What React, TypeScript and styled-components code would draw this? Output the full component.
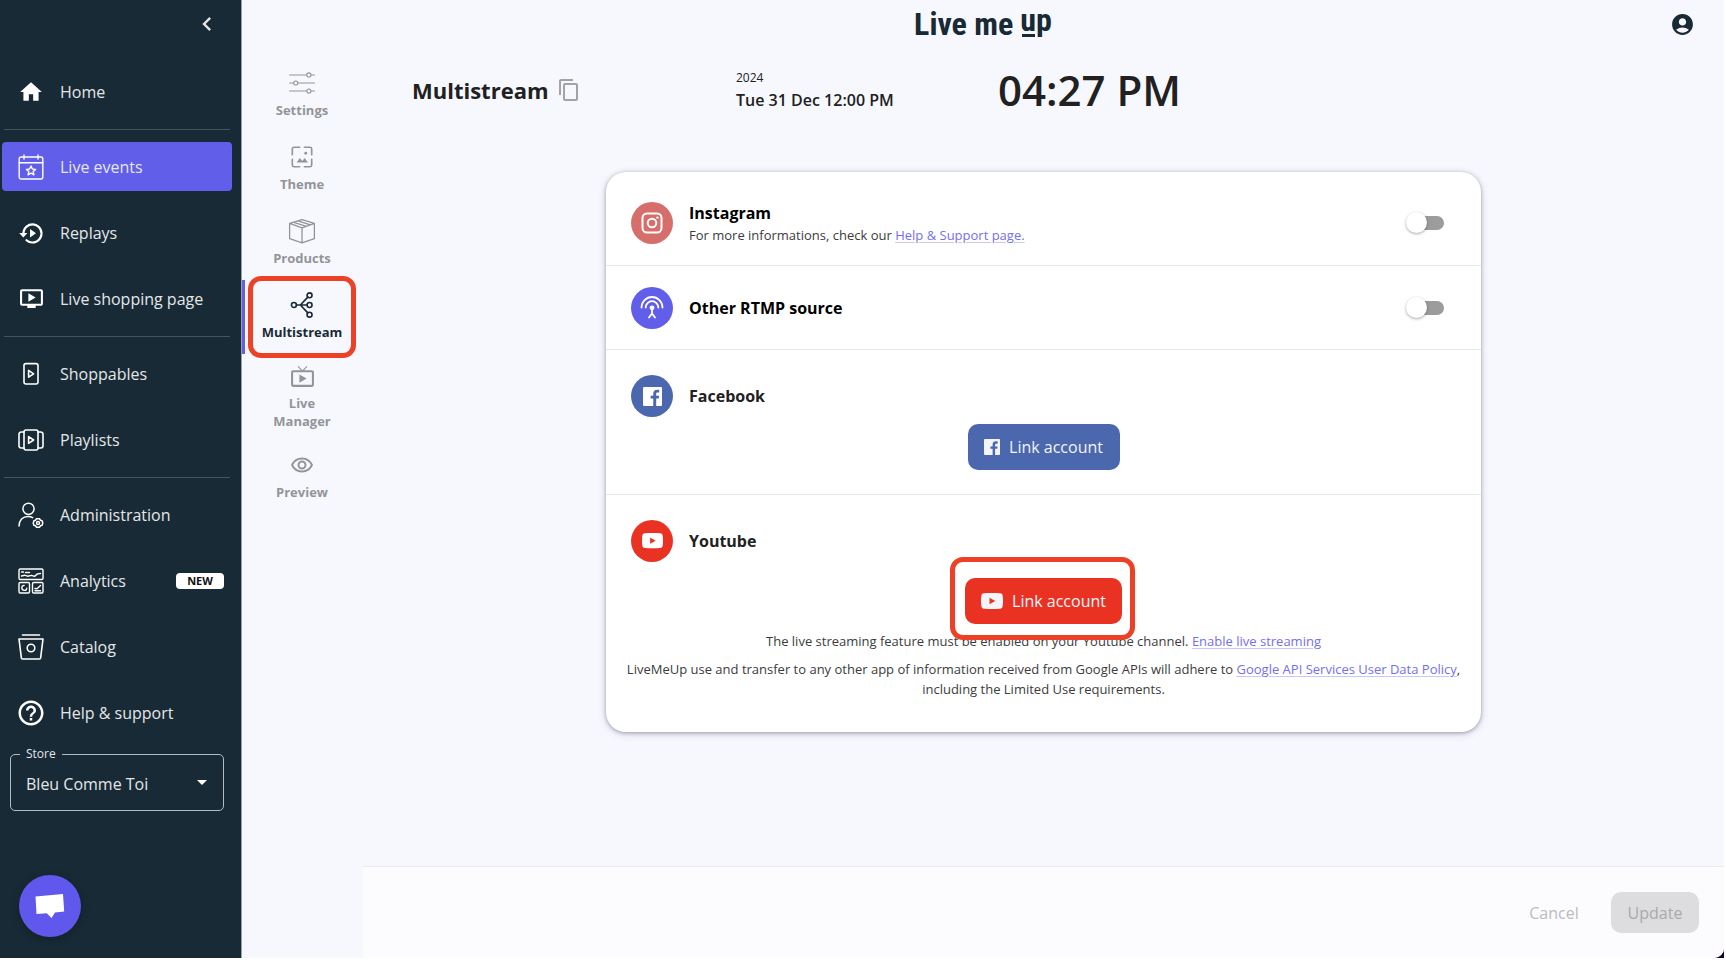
import React from 'react';
import styled, { createGlobalStyle, css } from 'styled-components';
import {
  MdAccountCircle,
  MdChevronLeft,
  MdContentCopy,
  MdHelpOutline,
  MdHome,
  MdLiveTv,
  MdOndemandVideo,
  MdOutlineRemoveRedEye,
} from 'react-icons/md';

const color = {
  navy: '#182a35',
  violet: '#615eea',
  page: '#f7f8fe',
  grey: '#949498',
  ink: '#212121',
  facebook: '#4b67ad',
  youtube: '#ea3223',
  callout: '#ec4127',
};

const GlobalStyle = createGlobalStyle`
  *, *::before, *::after { box-sizing: border-box; }
  body {
    margin: 0;
    background: #ffffff;
    color: ${color.ink};
    font-family: 'Open Sans', 'Noto Sans', sans-serif;
    font-size: 16px;
  }
  button, select, input { font: inherit; }
  h1, p { margin: 0; }
`;

const Shell = styled.div`
  display: flex;
  min-height: calc(100vh - 6px);
  margin: 0 2px 6px 0;
  background: #150033;
`;

const Sidebar = styled.aside`
  flex: 0 0 242px;
  display: flex;
  flex-direction: column;
  background: ${color.navy};
  color: #e4e7e9;
  border-right: 1px solid #9a9fa8;
`;

const SidebarTop = styled.div`
  display: flex;
  justify-content: flex-end;
  align-items: center;
  height: 48px;
  padding-right: 20px;
`;

const IconButton = styled.button`
  display: flex;
  padding: 0;
  border: 0;
  background: none;
  color: inherit;
  cursor: pointer;
`;

const NavList = styled.ul`
  display: flex;
  flex-direction: column;
  gap: 17px;
  margin: 0;
  padding: 12px 9px 13px 2px;
  list-style: none;

  &:first-child {
    padding-top: 19px;
  }

  &:last-child {
    padding-bottom: 10px;
  }
`;

const NavRule = styled.hr`
  height: 1px;
  margin: 0 11px 0 4px;
  border: 0;
  background: #46545d;
`;

const NavLink = styled.a<{ $active?: boolean }>`
  display: flex;
  align-items: center;
  gap: 16px;
  height: 49px;
  padding: 0 8px 0 16px;
  border-radius: 4px;
  color: inherit;
  text-decoration: none;
  background: ${(p) => (p.$active ? color.violet : 'transparent')};
`;

const NavIcon = styled.span`
  flex: none;
  display: flex;
  justify-content: center;
  width: 26px;
  color: #ffffff;

  svg {
    flex: none;
  }
`;

const NewBadge = styled.span`
  margin-left: auto;
  width: 48px;
  border-radius: 4px;
  background: #ffffff;
  color: #111111;
  font-size: 11px;
  font-weight: 700;
  line-height: 16px;
  text-align: center;
`;

const StoreField = styled.fieldset`
  position: relative;
  height: 64px;
  margin: 0 17px 0 10px;
  padding: 0;
  border: 1px solid #b5bcc0;
  border-radius: 5px;

  legend {
    margin-left: 9px;
    padding: 0 6px;
    font-size: 12px;
    line-height: 14px;
  }

  svg {
    position: absolute;
    right: 16px;
    top: 19px;
    pointer-events: none;
  }
`;

const StoreSelect = styled.select`
  appearance: none;
  width: 100%;
  height: 46px;
  padding: 0 40px 0 15px;
  border: 0;
  background: transparent;
  color: inherit;
`;

const ChatButton = styled.button`
  display: flex;
  align-items: center;
  justify-content: center;
  width: 62px;
  height: 62px;
  margin: auto 0 21px 19px;
  padding: 0;
  border: 0;
  border-radius: 50%;
  background: #6057ec;
  box-shadow: 0 2px 8px rgba(0, 0, 0, 0.25);
  cursor: pointer;
`;

const Workspace = styled.div`
  flex: 1;
  min-width: 0;
  display: flex;
  flex-direction: column;
  background: ${color.page};
  border-bottom-right-radius: 10px;
  overflow: hidden;
`;

const TopBar = styled.header`
  display: grid;
  grid-template-columns: 1fr auto 1fr;
  align-items: center;
  height: 48px;
  padding: 0 29px;
  color: ${color.navy};

  > button {
    grid-column: 3;
    justify-self: end;
  }
`;

const Logo = styled.a`
  grid-column: 2;
  display: flex;
  gap: 7px;
  color: ${color.navy};
  font-family: 'Liberation Sans Narrow', 'Roboto Condensed', sans-serif;
  font-size: 32px;
  font-weight: 700;
  line-height: 48px;
  text-decoration: none;
`;

const LogoUp = styled.span`
  position: relative;
  padding-bottom: 8px;
  line-height: 40px;

  &::after {
    content: '';
    position: absolute;
    left: 2px;
    top: 34px;
    width: 13px;
    height: 3px;
    background: currentColor;
  }
`;

const Columns = styled.div`
  flex: 1;
  display: flex;
`;

const StepNav = styled.nav`
  flex: 0 0 121px;
  display: flex;
  flex-direction: column;
  padding-top: 10px;
`;

const StepLink = styled.a<{ $active?: boolean; $tall?: boolean }>`
  position: relative;
  display: flex;
  flex-direction: column;
  align-items: center;
  justify-content: center;
  gap: 4px;
  height: ${(p) => (p.$tall ? 86 : 74)}px;
  padding: 0 20px 2px 16px;
  border-left: 3px solid ${(p) => (p.$active ? color.violet : 'transparent')};
  color: ${(p) => (p.$active ? color.navy : color.grey)};
  font-size: 13px;
  font-weight: 700;
  line-height: 18px;
  text-align: center;
  text-decoration: none;
`;

const StepIcon = styled.span`
  display: flex;
  align-items: center;
  justify-content: center;
  height: 28px;
`;

const Callout = styled.span<{ $inset: string }>`
  position: absolute;
  inset: ${(p) => p.$inset};
  border: 5px solid ${color.callout};
  border-radius: 13px;
  pointer-events: none;
`;

const Main = styled.main`
  flex: 1;
  min-width: 0;
  display: flex;
  flex-direction: column;
`;

const EventHeader = styled.div`
  display: grid;
  grid-template-columns: 324px 262px 1fr;
  align-items: center;
  height: 84px;
  padding-left: 49px;
`;

const Title = styled.div`
  display: flex;
  align-items: center;
  gap: 8px;
  color: #a3a3a6;

  h1 {
    color: ${color.ink};
    font-size: 22px;
    font-weight: 700;
    line-height: 32px;
  }
`;

const Schedule = styled.div`
  display: flex;
  flex-direction: column;
  font-weight: 600;
  line-height: 24px;

  small {
    font-size: 12px;
    font-weight: 400;
    line-height: 20px;
  }
`;

const Clock = styled.time`
  font-size: 42px;
  font-weight: 600;
  line-height: 56px;
`;

const Card = styled.section`
  width: 875px;
  max-width: 100%;
  margin: 40px auto auto;
  border-radius: 20px;
  background: #ffffff;
  box-shadow: 0 1px 4px rgba(40, 40, 60, 0.4), 0 2px 10px rgba(40, 40, 90, 0.12);
`;

const Channel = styled.div<{ $pad: string }>`
  display: flex;
  flex-direction: column;
  padding: ${(p) => p.$pad};
  border-bottom: 1px solid #e7e7e9;

  &:last-child {
    border-bottom: 0;
  }
`;

const ChannelHead = styled.div`
  display: flex;
  align-items: center;
  gap: 16px;
  min-height: 42px;
`;

const Disc = styled.span<{ $bg: string }>`
  flex: none;
  display: flex;
  align-items: center;
  justify-content: center;
  width: 42px;
  height: 42px;
  border-radius: 50%;
  background: ${(p) => p.$bg};
  color: #ffffff;
`;

const ChannelText = styled.div`
  flex: 1;
  display: flex;
  flex-direction: column;
`;

const ChannelName = styled.label<{ $black?: boolean }>`
  color: ${(p) => (p.$black ? '#000000' : color.ink)};
  font-weight: 700;
  line-height: 24px;
`;

const Note = styled.p<{ $center?: boolean }>`
  color: #3c3c3c;
  font-size: 13px;
  line-height: 20px;
  ${(p) =>
    p.$center &&
    css`
      text-align: center;
    `}
`;

const Notes = styled.div`
  display: flex;
  flex-direction: column;
  gap: 8px;
  margin: 7px -12px 0;
`;

const TextLink = styled.a`
  color: #746ff0;
  text-decoration: underline;
  text-decoration-color: #c9c8f8;
  text-underline-offset: 2px;
`;

const Switch = styled.input`
  appearance: none;
  position: relative;
  width: 38px;
  height: 22px;
  margin: 0 12px 0 0;
  cursor: pointer;

  &::before {
    content: '';
    position: absolute;
    inset: 4px 0 4px 2px;
    border-radius: 8px;
    background: #9c9c9c;
  }

  &::after {
    content: '';
    position: absolute;
    left: 0;
    top: 0;
    width: 21px;
    height: 21px;
    border-radius: 50%;
    background: #ffffff;
    box-shadow: 0 1px 3px rgba(0, 0, 0, 0.35);
  }

  &:checked::after {
    left: 17px;
  }
`;

const LinkRow = styled.div<{ $gap: number }>`
  position: relative;
  z-index: 1;
  align-self: center;
  display: flex;
  margin-top: ${(p) => p.$gap}px;
`;

const LinkButton = styled.button<{ $bg: string; $width: number }>`
  display: flex;
  align-items: center;
  justify-content: center;
  gap: 9px;
  width: ${(p) => p.$width}px;
  height: 46px;
  padding: 0;
  border: 0;
  border-radius: 10px;
  background: ${(p) => p.$bg};
  color: #f4f5fb;
  cursor: pointer;
`;

const Footer = styled.footer`
  display: flex;
  align-items: center;
  justify-content: flex-end;
  gap: 13px;
  height: 92px;
  padding-right: 25px;
  border-top: 1px solid #ebebf1;
  background: #fcfcfe;
`;

const FooterButton = styled.button<{ $filled?: boolean }>`
  width: 88px;
  height: 41px;
  padding: 0;
  border: 0;
  border-radius: 10px;
  background: ${(p) => (p.$filled ? '#dddddf' : 'transparent')};
  color: ${(p) => (p.$filled ? '#a9a9ab' : '#bbbbbd')};
`;

type IconProps = { size: number; stroke?: number; children: React.ReactNode };

const LineIcon = ({ size, stroke = 1.5, children }: IconProps) => (
  <svg
    width={size}
    height={size}
    viewBox="0 0 26 26"
    fill="none"
    stroke="currentColor"
    strokeWidth={stroke}
    strokeLinecap="round"
    strokeLinejoin="round"
    aria-hidden="true"
  >
    {children}
  </svg>
);

const CalendarStarIcon = () => (
  <LineIcon size={26} stroke={1.4}>
    <rect x="1.2" y="3" width="23.6" height="22" rx="2" />
    <path d="M1.2 8.8h23.6M6 1v4M20 1v4" />
    <path d="M13 12l1.4 3 3.2.4-2.4 2.2.7 3.2-2.9-1.6-2.9 1.6.7-3.2-2.4-2.2 3.2-.4z" />
  </LineIcon>
);

const ReplayIcon = () => (
  <LineIcon size={26} stroke={2.2}>
    <path d="M5.5 14A9 9 0 1 1 8.5 20.2" />
    <path d="M1.2 13h8.2l-4.1 4.6z" fill="currentColor" stroke="none" />
    <path d="M12 9l6 4.2-6 4.2z" fill="currentColor" stroke="none" />
  </LineIcon>
);

const PhonePlayIcon = () => (
  <LineIcon size={26} stroke={1.6}>
    <rect x="6" y="2.6" width="14" height="20.4" rx="2" />
    <path d="M10.6 9.4v6.8l5-3.4z" />
  </LineIcon>
);

const PlaylistIcon = () => (
  <LineIcon size={26} stroke={1.6}>
    <rect x="6" y="3" width="14" height="20" rx="2" />
    <path d="M10.6 9.6v6.8l5-3.4zM6 5H3.2A2.2 2.2 0 0 0 1 7.2v11.6A2.2 2.2 0 0 0 3.2 21H6M20 5h2.8A2.2 2.2 0 0 1 25 7.2v11.6A2.2 2.2 0 0 1 22.8 21H20" />
  </LineIcon>
);

const AdminIcon = () => (
  <LineIcon size={26} stroke={1.5}>
    <circle cx="10.5" cy="6.8" r="5.6" />
    <path d="M1 24c0-6 3.8-9.6 9-9.6 2 0 3.4.4 4.6 1.2" />
    <circle cx="20" cy="21" r="1.5" />
    <path d="M18.4 16.8h3.2l.8 1.4 1.7.6.7 2.2-.7 2.2-1.7.6-.8 1.4h-3.2l-.8-1.4-1.7-.6-.7-2.2.7-2.2 1.7-.6z" />
  </LineIcon>
);

const AnalyticsIcon = () => (
  <LineIcon size={26} stroke={1.4}>
    <rect x="1" y="1" width="24" height="10.5" rx="1.2" />
    <rect x="1" y="14.5" width="10.5" height="10.5" rx="1.2" />
    <rect x="14.5" y="14.5" width="10.5" height="10.5" rx="1.2" />
    <path d="M3.5 4h2M7.5 4.5h4M3.5 8l3-.8 3 1 4-.8 3 1 3-2.5 3-.4" />
    <path d="M6.2 17.4a2.5 2.5 0 1 0 2.6 2.9M17 20.5l2 .3 3.5-3.3M17 22.8h5.500" />
  </LineIcon>
);

const CatalogIcon = () => (
  <LineIcon size={26} stroke={1.6}>
    <path d="M4.500 1h17M1 5h24l-2.400 19.200a1 1 0 0 1-1 .8H4.400a1 1 0 0 1-1-.8z" />
    <circle cx="13" cy="14" r="3.8" />
  </LineIcon>
);

const SlidersIcon = () => (
  <LineIcon size={28} stroke={1}>
    <path d="M1.500 5.500h15.800M21.600 5.500h3M1.500 13h3.500M9.300 13h15.300M1.500 20.500h15.800M21.600 20.500h3" />
    <circle cx="19.4" cy="5.5" r="1.9" />
    <circle cx="7.2" cy="13" r="1.9" />
    <circle cx="19.4" cy="20.5" r="1.9" />
  </LineIcon>
);

const FrameImageIcon = () => (
  <LineIcon size={28} stroke={1.5}>
    <path d="M10.800 4H5.500A1.500 1.500 0 0 0 4 5.500v5.300M15.200 4h5.300A1.500 1.500 0 0 1 22 5.500v5.300M4 15.200v5.300A1.500 1.500 0 0 0 5.500 22h5.300M22 15.200v5.300a1.500 1.500 0 0 1-1.500 1.500h-5.300" />
    <path d="M8 18l3-4 2.200 2.600L15.500 14l3 4z" fill="currentColor" stroke="none" />
    <circle cx="16.5" cy="9.5" r="1.3" fill="currentColor" stroke="none" />
  </LineIcon>
);

const BoxIcon = () => (
  <LineIcon size={28} stroke={1.2}>
    <path d="M13 2.500l11.500 3.500v14L13 24 1.500 20V6zM1.500 6L13 10l11.500-4M13 10v14M9.200 3.700l11.500 3.600M5.400 4.900L17 8.600" />
  </LineIcon>
);

const SplitIcon = () => (
  <LineIcon size={28} stroke={1.5}>
    <circle cx="5.5" cy="13" r="2.3" />
    <circle cx="20" cy="4" r="2.3" />
    <circle cx="20" cy="13" r="2.3" />
    <circle cx="20" cy="22" r="2.3" />
    <path d="M7.800 13h9.900M11.500 13L18.400 5.700M11.500 13l6.900 7.300" />
  </LineIcon>
);

const InstagramIcon = () => (
  <LineIcon size={26} stroke={2}>
    <rect x="3.5" y="3.5" width="19" height="19" rx="4.5" />
    <circle cx="13" cy="13" r="4.3" />
    <circle cx="18.4" cy="7.6" r="1.2" fill="currentColor" stroke="none" />
  </LineIcon>
);

const AntennaIcon = () => (
  <LineIcon size={26} stroke={1.8}>
    <path d="M2.500 12.500a10.500 10.500 0 0 1 21 0M6.700 12.500a6.300 6.300 0 0 1 12.600 0" />
    <circle cx="13" cy="12.8" r="2.4" fill="currentColor" stroke="none" />
    <path d="M13 13v5.500l-3 4M13 18.500l3 4" />
  </LineIcon>
);

const FacebookIcon = ({ size }: { size: number }) => (
  <svg width={size} height={size} viewBox="0 0 18 18" aria-hidden="true">
    <path
      fill="currentColor"
      d="M1 0h16a1 1 0 0 1 1 1v16a1 1 0 0 1-1 1h-4.500v-7h2.400l.4-2.700h-2.800V6.600c0-.8.4-1.300 1.400-1.300h1.500V2.800c-.4-.1-1.200-.2-2-.2-2.300 0-3.700 1.300-3.700 3.600v2.100H7.200V11h2.500v7H1a1 1 0 0 1-1-1V1a1 1 0 0 1 1-1z"
    />
  </svg>
);

const YoutubeIcon = ({ width }: { width: number }) => (
  <svg width={width} height={(width * 16) / 22} viewBox="0 0 22 16" aria-hidden="true">
    <path
      fill="currentColor"
      fillRule="evenodd"
      d="M3 .3C8 -.1 14 -.1 19 .3c1.700.2 2.500 1 2.700 2.700.4 3.300.4 6.700 0 10-.2 1.700-1 2.500-2.700 2.700-5 .4-11 .4-16 0C1.300 15.500.5 14.700.3 13c-.4-3.300-.4-6.700 0-10C.5 1.300 1.300.5 3 .3zM8.500 4.800v6.400L14.300 8z"
    />
  </svg>
);

const ChatIcon = () => (
  <svg width="30" height="26" viewBox="0 0 30 26" fill="#ffffff" aria-hidden="true">
    <path d="M.5 3.500L28 1l1.200 17.500-9.200.9L16.500 25l-4.800-4.800L1.500 21z" />
  </svg>
);

type NavItemProps = {
  href: string;
  icon: React.ReactNode;
  active?: boolean;
  isNew?: boolean;
  children: React.ReactNode;
};

const NavItem = ({ href, icon, active, isNew, children }: NavItemProps) => (
  <li>
    <NavLink href={href} $active={active} aria-current={active ? 'page' : undefined}>
      <NavIcon>{icon}</NavIcon>
      {children}
      {isNew && <NewBadge>NEW</NewBadge>}
    </NavLink>
  </li>
);

export default function App() {
  return (
    <>
      <GlobalStyle />
      <Shell>
        <Sidebar>
          <SidebarTop>
            <IconButton aria-label="Collapse menu">
              <MdChevronLeft size={28} />
            </IconButton>
          </SidebarTop>
          <nav aria-label="Main">
            <NavList>
              <NavItem href="#home" icon={<MdHome size={26} />}>Home</NavItem>
            </NavList>
            <NavRule />
            <NavList>
              <NavItem href="#live-events" icon={<CalendarStarIcon />} active>Live events</NavItem>
              <NavItem href="#replays" icon={<ReplayIcon />}>Replays</NavItem>
              <NavItem href="#live-shopping" icon={<MdOndemandVideo size={25} />}>Live shopping page</NavItem>
            </NavList>
            <NavRule />
            <NavList>
              <NavItem href="#shoppables" icon={<PhonePlayIcon />}>Shoppables</NavItem>
              <NavItem href="#playlists" icon={<PlaylistIcon />}>Playlists</NavItem>
            </NavList>
            <NavRule />
            <NavList>
              <NavItem href="#administration" icon={<AdminIcon />}>Administration</NavItem>
              <NavItem href="#analytics" icon={<AnalyticsIcon />} isNew>Analytics</NavItem>
              <NavItem href="#catalog" icon={<CatalogIcon />}>Catalog</NavItem>
              <NavItem href="#help" icon={<MdHelpOutline size={30} />}>Help &amp; support</NavItem>
            </NavList>
          </nav>
          <StoreField>
            <legend><label htmlFor="store">Store</label></legend>
            <StoreSelect id="store" defaultValue="Bleu Comme Toi">
              <option>Bleu Comme Toi</option>
            </StoreSelect>
            <svg width="10" height="5" viewBox="0 0 10 5" fill="#ffffff" aria-hidden="true">
              <path d="M0 0h10L5 5z" />
            </svg>
          </StoreField>
          <ChatButton aria-label="Open chat"><ChatIcon /></ChatButton>
        </Sidebar>

        <Workspace>
          <TopBar>
            <Logo href="#top">
              <span>Live me</span>
              <LogoUp>up</LogoUp>
            </Logo>
            <IconButton aria-label="Account"><MdAccountCircle size={25} /></IconButton>
          </TopBar>
          <Columns>
            <StepNav aria-label="Event steps">
              <StepLink href="#settings"><StepIcon><SlidersIcon /></StepIcon>Settings</StepLink>
              <StepLink href="#theme"><StepIcon><FrameImageIcon /></StepIcon>Theme</StepLink>
              <StepLink href="#products"><StepIcon><BoxIcon /></StepIcon>Products</StepLink>
              <StepLink href="#multistream" $active aria-current="step">
                <StepIcon><SplitIcon /></StepIcon>Multistream
                <Callout $inset="-4px 7px -4px 3px" />
              </StepLink>
              <StepLink href="#live-manager" $tall><StepIcon><MdLiveTv size={25} /></StepIcon>Live Manager</StepLink>
              <StepLink href="#preview"><StepIcon><MdOutlineRemoveRedEye size={24} /></StepIcon>Preview</StepLink>
            </StepNav>
            <Main>
              <EventHeader>
                <Title>
                  <h1>Multistream</h1>
                  <IconButton aria-label="Copy link"><MdContentCopy size={24} /></IconButton>
                </Title>
                <Schedule>
                  <small>2024</small>
                  <span>Tue 31 Dec 12:00 PM</span>
                </Schedule>
                <Clock dateTime="16:27">04:27 PM</Clock>
              </EventHeader>

              <Card>
                <Channel $pad="29px 25px 20px">
                  <ChannelHead>
                    <Disc $bg="#d66f6b"><InstagramIcon /></Disc>
                    <ChannelText>
                      <ChannelName htmlFor="instagram" $black>Instagram</ChannelName>
                      <Note>
                        For more informations, check our <TextLink href="#support">Help &amp; Support page.</TextLink>
                      </Note>
                    </ChannelText>
                    <Switch id="instagram" type="checkbox" />
                  </ChannelHead>
                </Channel>
                <Channel $pad="21px 25px 20px">
                  <ChannelHead>
                    <Disc $bg={color.violet}><AntennaIcon /></Disc>
                    <ChannelText>
                      <ChannelName htmlFor="rtmp" $black>Other RTMP source</ChannelName>
                    </ChannelText>
                    <Switch id="rtmp" type="checkbox" />
                  </ChannelHead>
                </Channel>
                <Channel $pad="25px 25px 24px">
                  <ChannelHead>
                    <Disc $bg={color.facebook}><FacebookIcon size={19} /></Disc>
                    <ChannelName as="span">Facebook</ChannelName>
                  </ChannelHead>
                  <LinkRow $gap={7}>
                    <LinkButton $bg={color.facebook} $width={152}><FacebookIcon size={16} />Link account</LinkButton>
                  </LinkRow>
                </Channel>
                <Channel $pad="25px 25px 33px">
                  <ChannelHead>
                    <Disc $bg={color.youtube}><YoutubeIcon width={21} /></Disc>
                    <ChannelName as="span">Youtube</ChannelName>
                  </ChannelHead>
                  <LinkRow $gap={16}>
                    <LinkButton $bg={color.youtube} $width={157}><YoutubeIcon width={22} />Link account</LinkButton>
                    <Callout $inset="-21px -13px -16px -15px" />
                  </LinkRow>
                  <Notes>
                    <Note $center>
                      The live streaming feature must be enabled on your Youtube channel.{' '}
                      <TextLink href="#enable">Enable live streaming</TextLink>
                    </Note>
                    <Note $center>
                      LiveMeUp use and transfer to any other app of information received from Google APIs will adhere to{' '}
                      <TextLink href="#policy">Google API Services User Data Policy</TextLink>,
                      <br />
                      including the Limited Use requirements.
                    </Note>
                  </Notes>
                </Channel>
              </Card>

              <Footer>
                <FooterButton disabled>Cancel</FooterButton>
                <FooterButton disabled $filled>Update</FooterButton>
              </Footer>
            </Main>
          </Columns>
        </Workspace>
      </Shell>
    </>
  );
}
